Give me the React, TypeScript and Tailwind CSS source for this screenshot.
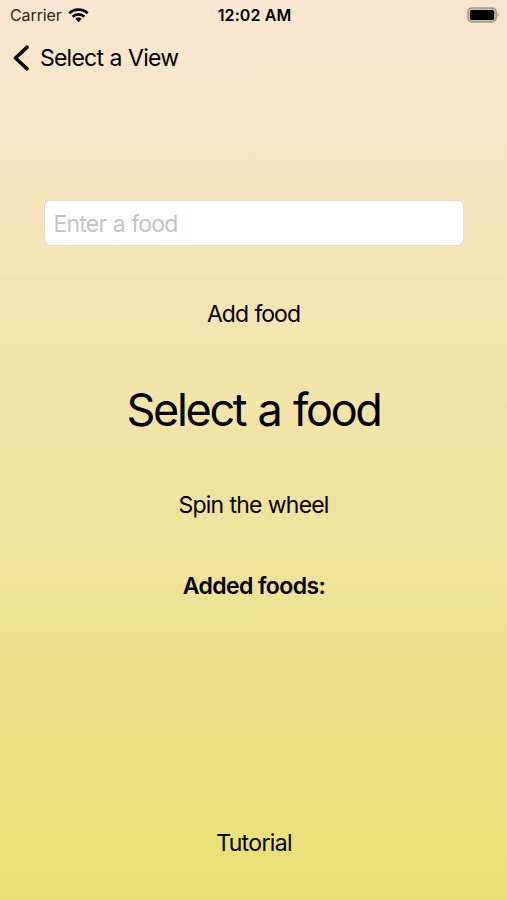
const App = () => {
  return (
    <div className="flex h-[900px] w-[507px] flex-col overflow-hidden bg-linear-to-b from-[#f9e6d0] to-[#eae072] font-['Inter',sans-serif] text-black">
      <header className="flex h-[30px] items-center justify-between pl-[10px] pr-[8px]">
        <div className="flex w-[150px] items-center gap-[6px]">
          <span className="text-[16px] tracking-[-0.1px] text-[#2c2824]">Carrier</span>
          <svg width="21" height="15" viewBox="0 0 21 15" fill="none" stroke="black" strokeWidth="2.700">
            <path d="M1.300 5.200C6.400 0.500 14.600 0.500 19.700 5.200" />
            <path d="M4.600 8.700C7.900 5.700 13.100 5.700 16.400 8.700" />
            <path d="M10.500 9.600C9.200 9.600 8.200 10.100 7.500 10.900L10.500 14.200L13.500 10.900C12.800 10.100 11.800 9.600 10.500 9.600Z" fill="black" stroke="none" />
          </svg>
        </div>
        <span className="text-[16px] font-semibold tracking-[0.1px]">12:02 AM</span>
        <div className="flex w-[150px] justify-end">
          <svg className="-mt-[1px]" width="32" height="16" viewBox="0 0 32 16">
            <rect x="1" y="0.900" width="28.200" height="14" rx="4" fill="#cfc0ad" stroke="#a39788" strokeWidth="1.500" />
            <rect x="3" y="2.900" width="24.200" height="10" rx="1.500" fill="black" />
            <path d="M30.500 5.700C32 6.200 32 9.600 30.500 10.100Z" fill="#a39788" />
          </svg>
        </div>
      </header>
      <nav className="flex h-[56px] items-center gap-[11px] pl-[13px]">
        <svg width="16" height="26" viewBox="0 0 16 26" fill="none" stroke="black" strokeWidth="3.600" strokeLinecap="round" strokeLinejoin="round">
          <path d="M14 2.200L2.500 13L14 23.800" />
        </svg>
        <span className="text-[23px] tracking-[-0.78px] [word-spacing:0.7px]">Select a View</span>
      </nav>
      <main className="flex flex-1 flex-col items-center">
        <input
          className="mt-[114px] h-[46px] w-[420px] rounded-[7px] border border-[#dfdbd2] bg-white px-[9px] pt-[2px] text-[23px] tracking-[-0.8px] [word-spacing:0.7px] outline-none placeholder:text-[#c3c3c5]"
          placeholder="Enter a food"
        />
        <button className="mt-[51px] h-[32px] text-[23px] tracking-[-0.95px] [word-spacing:0.8px]">Add food</button>
        <h1 className="mt-[51px] h-[60px] text-[45px] leading-[60px] tracking-[-2.300px] [word-spacing:2px]">Select a food</h1>
        <button className="mt-[48px] h-[32px] text-[23px] tracking-[-0.83px] [word-spacing:0.7px]">Spin the wheel</button>
        <h2 className="mt-[50px] h-[32px] pl-[1px] text-[23px] font-semibold leading-[32px] tracking-[-0.6px]">Added foods:</h2>
        <button className="mt-auto mb-[42px] h-[32px] pl-[1px] text-[23px] tracking-[-0.65px]">Tutorial</button>
      </main>
    </div>
  );
};
export default App;
